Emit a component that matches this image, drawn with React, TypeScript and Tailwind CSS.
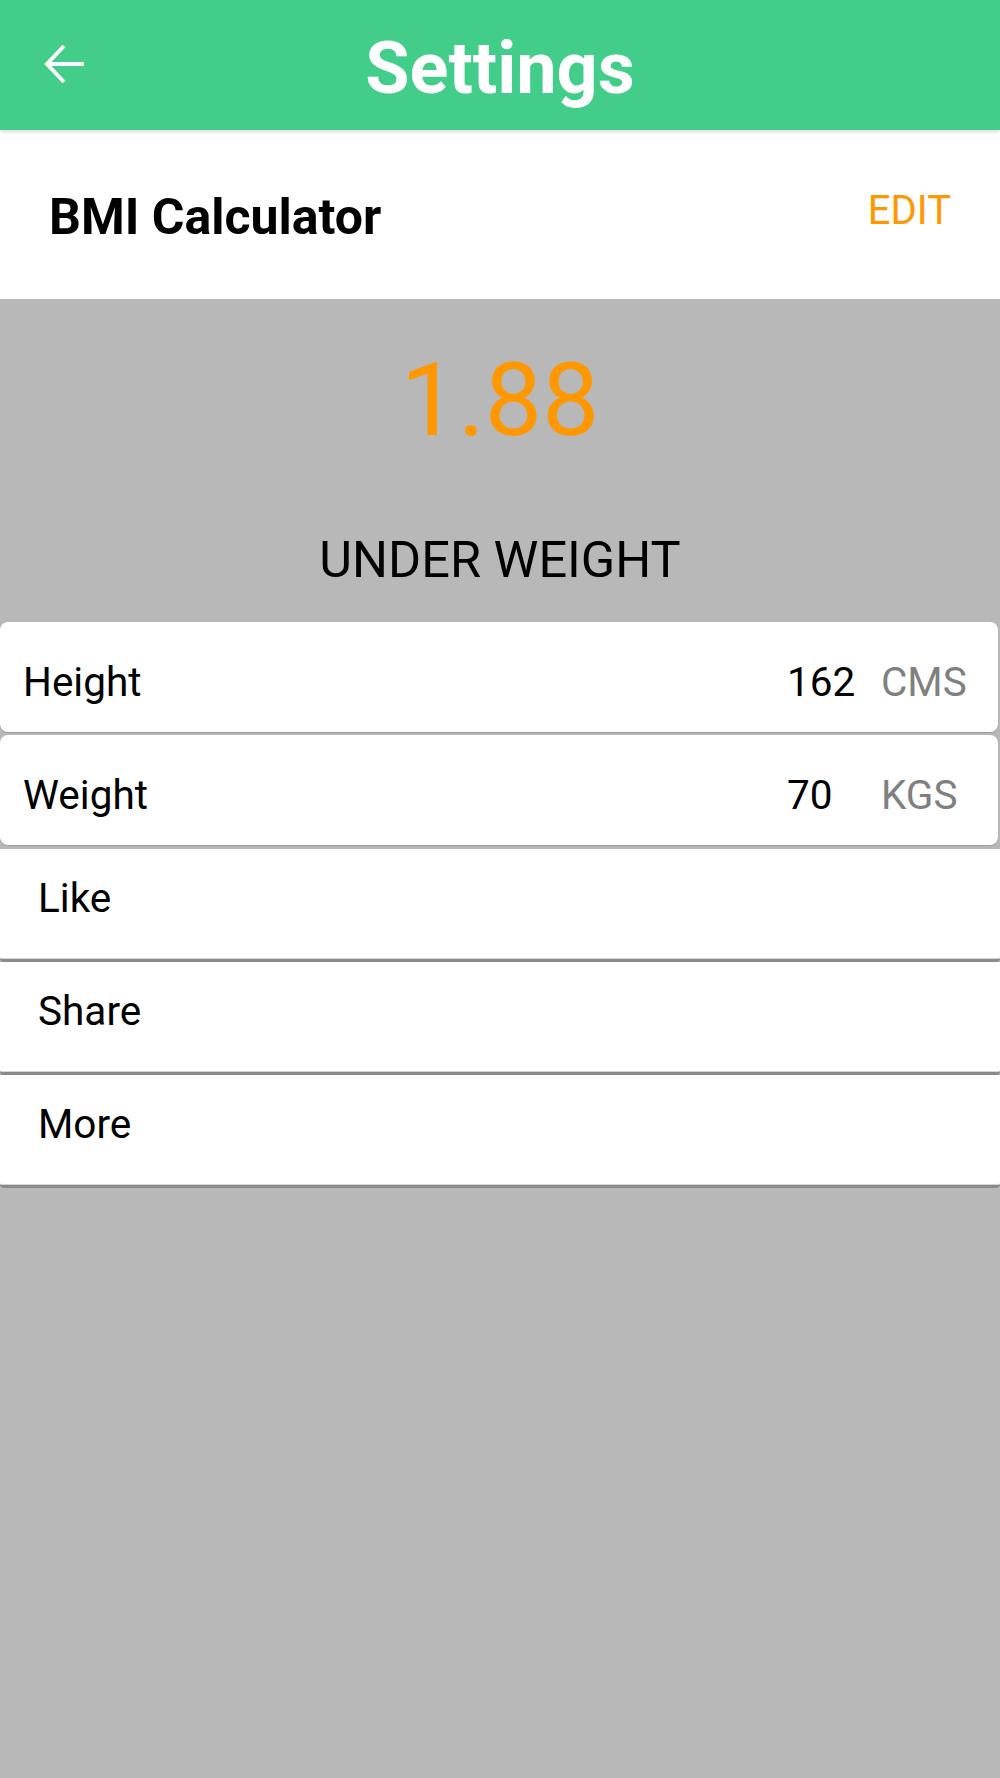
import React from 'react';

const font = { fontFamily: 'Roboto, "Noto Sans", sans-serif' };

function MeasureCard({ label, value, unit }: { label: string; value: string; unit: string }) {
  return (
    <div className="flex h-[110px] items-start rounded-[8px] bg-white pt-[40px] shadow-[0_1px_1px_rgba(0,0,0,0.15)]">
      <span className="flex-1 pl-[23px] text-[40.5px] leading-[40px] text-black">{label}</span>
      <span className="w-[94px] text-[40.5px] leading-[40px] text-black">{value}</span>
      <span className="w-[117px] text-[40.5px] leading-[40px] text-[#808080]">{unit}</span>
    </div>
  );
}

function MenuRow({ label }: { label: string }) {
  return (
    <div className="h-[113px] rounded-b-[4px] border-b-[3px] border-[#8a8a8a] bg-white pl-[38px] pt-[29px] shadow-[0_-1px_0_#d6d6d6_inset]">
      <span className="text-[40.5px] leading-[40px] text-black">{label}</span>
    </div>
  );
}

export default function App() {
  return (
    <div className="min-h-[1778px] w-[1000px] bg-[#b8b8b8]" style={font}>
      {/* Toolbar */}
      <header className="relative z-10 flex h-[130px] justify-center bg-[#43cd8a] pt-[33px] shadow-[0_2px_4px_rgba(0,0,0,0.15)]">
        <button className="absolute left-[44px] top-[44px] h-[40px] w-[40px]">
          <svg viewBox="0 0 40 40" className="h-[40px] w-[40px]" fill="none" stroke="white" strokeWidth={4}>
            <path d="M3 20H40" />
            <path d="M20 2L3 20L20 38" strokeLinejoin="miter" />
          </svg>
        </button>
        <h1 className="text-[72px] font-bold leading-[72px] text-white">Settings</h1>
      </header>

      {/* Title row */}
      <div className="flex h-[169px] items-start justify-between bg-white pl-[49px] pr-[49px]">
        <span className="mt-[62px] text-[50px] font-bold leading-[50px] text-black">BMI Calculator</span>
        <button className="mt-[61px] text-[40px] leading-[40px] text-[#ff9800]">EDIT</button>
      </div>

      {/* Result */}
      <div className="flex h-[323px] flex-col items-center">
        <span className="mt-[50px] text-[102px] leading-[102px] text-[#ff9800]">1.88</span>
        <span className="mt-[84px] text-[50.5px] leading-[50px] text-black">UNDER WEIGHT</span>
      </div>

      {/* Inputs */}
      <div className="flex flex-col gap-[3px] pr-[2px]">
        <MeasureCard label="Height" value="162" unit="CMS" />
        <MeasureCard label="Weight" value="70" unit="KGS" />
      </div>

      {/* Menu */}
      <div className="mt-[4px] flex flex-col">
        <MenuRow label="Like" />
        <MenuRow label="Share" />
        <MenuRow label="More" />
      </div>
    </div>
  );
}
